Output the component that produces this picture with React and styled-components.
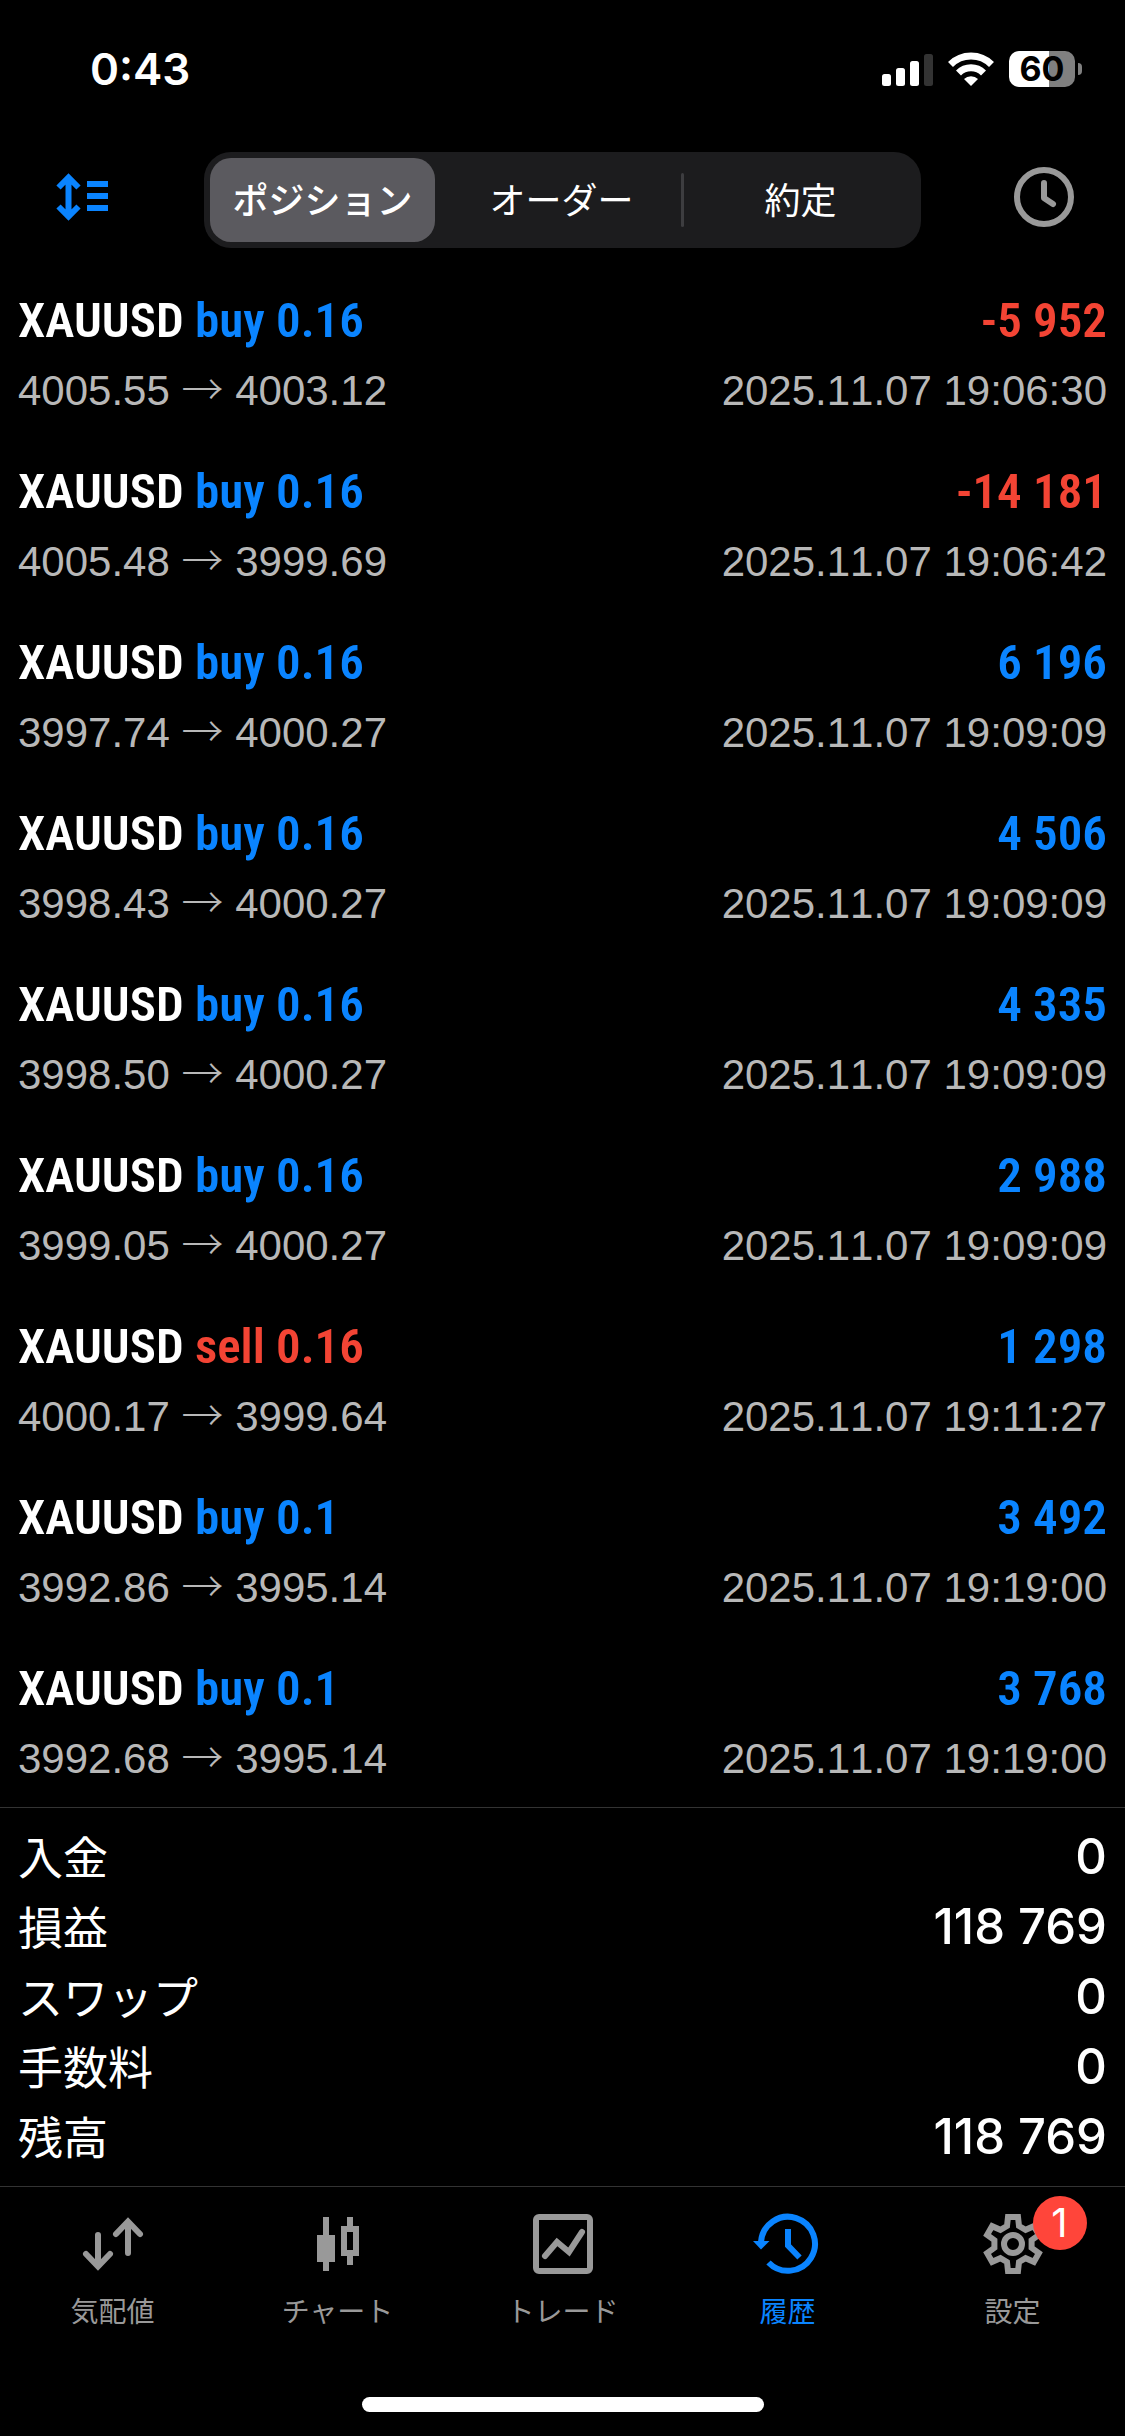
import React, { useState } from "react";
import styled, { createGlobalStyle } from "styled-components";

const deals = [
  { type: "buy", volume: "0.16", open: "4005.55", close: "4003.12", profit: "-5 952", time: "2025.11.07 19:06:30" },
  { type: "buy", volume: "0.16", open: "4005.48", close: "3999.69", profit: "-14 181", time: "2025.11.07 19:06:42" },
  { type: "buy", volume: "0.16", open: "3997.74", close: "4000.27", profit: "6 196", time: "2025.11.07 19:09:09" },
  { type: "buy", volume: "0.16", open: "3998.43", close: "4000.27", profit: "4 506", time: "2025.11.07 19:09:09" },
  { type: "buy", volume: "0.16", open: "3998.50", close: "4000.27", profit: "4 335", time: "2025.11.07 19:09:09" },
  { type: "buy", volume: "0.16", open: "3999.05", close: "4000.27", profit: "2 988", time: "2025.11.07 19:09:09" },
  { type: "sell", volume: "0.16", open: "4000.17", close: "3999.64", profit: "1 298", time: "2025.11.07 19:11:27" },
  { type: "buy", volume: "0.1", open: "3992.86", close: "3995.14", profit: "3 492", time: "2025.11.07 19:19:00" },
  { type: "buy", volume: "0.1", open: "3992.68", close: "3995.14", profit: "3 768", time: "2025.11.07 19:19:00" },
];

const summary = [
  { label: "入金", value: "0" },
  { label: "損益", value: "118 769" },
  { label: "スワップ", value: "0" },
  { label: "手数料", value: "0" },
  { label: "残高", value: "118 769" },
];

const segments = ["ポジション", "オーダー", "約定"];

// 歯車の輪郭 (歯6枚)
const gearPath = () => {
  const tooth = [
    [-6, -18],
    [-5, -27],
    [5, -27],
    [6, -18],
  ];
  const points = [];
  for (let i = 0; i < 6; i++) {
    const a = (i * Math.PI) / 3;
    tooth.forEach(([x, y]) => {
      const px = 30 + x * Math.cos(a) - y * Math.sin(a);
      const py = 30 + x * Math.sin(a) + y * Math.cos(a);
      points.push(`${px.toFixed(2)} ${py.toFixed(2)}`);
    });
  }
  return `M${points.join("L")}Z`;
};

const SortIcon = () => (
  <svg width="52" height="48" viewBox="-1 0 52 48" fill="none" stroke="currentColor" strokeWidth="6">
    <path d="M12.5 4V44M2.5 14.5L12.5 4.5L22.5 14.5M2.5 33.5L12.5 43.5L22.5 33.5" />
    <path d="M31 11H52M31 23H52M31 35H52" />
  </svg>
);

const ClockIcon = () => (
  <svg width="60" height="60" viewBox="0 0 60 60" fill="none" stroke="currentColor" strokeWidth="6">
    <circle cx="30" cy="30" r="27" />
    <path d="M30 16V31L39 37" strokeLinecap="round" strokeLinejoin="round" />
  </svg>
);

const QuotesIcon = () => (
  <TabSvg viewBox="0 0 60 60" strokeLinecap="round">
    <path d="M15 21V52M3 40L15 52.5L27 40" />
    <path d="M45 39V8M33 20L45 7.5L57 20" />
  </TabSvg>
);

const ChartIcon = () => (
  <TabSvg viewBox="0 0 60 60">
    <path d="M18 3V57M42 3V15M42 39V51" />
    <path d="M18 21V48" strokeWidth="18" />
    <path d="M36 15H48V39H36Z" />
  </TabSvg>
);

const TradeIcon = () => (
  <TabSvg viewBox="0 0 60 60">
    <rect x="3" y="3" width="54" height="54" rx="3" />
    <path d="M12 42L24 28L36 38L49 18" strokeLinecap="round" />
  </TabSvg>
);

const HistoryIcon = () => (
  <TabSvg viewBox="0 0 60 60">
    <path d="M3 28A27 27 0 1 1 10.5 48.5" />
    <path d="M-5 27H11.5L3 35.5Z" fill="currentColor" stroke="none" />
    <path d="M30 15V31.5L41.5 43.5" />
  </TabSvg>
);

const SettingsIcon = () => (
  <TabSvg viewBox="0 0 60 60">
    <path d={gearPath()} />
    <circle cx="30" cy="30" r="9" />
  </TabSvg>
);

const tabs = [
  { label: "気配値", Icon: QuotesIcon },
  { label: "チャート", Icon: ChartIcon },
  { label: "トレード", Icon: TradeIcon },
  { label: "履歴", Icon: HistoryIcon },
  { label: "設定", Icon: SettingsIcon, badge: 1 },
];

const StatusIcons = () => (
  <StatusRight>
    <svg width="51" height="33" viewBox="0 0 51 33" fill="#fff">
      <rect x="0" y="21" width="9" height="12" rx="2.5" />
      <rect x="14" y="15" width="9" height="18" rx="2.5" />
      <rect x="28" y="8" width="9" height="25" rx="2.5" />
      <rect x="42" y="1" width="9" height="32" rx="2.5" fill="#333" />
    </svg>
    <svg width="46" height="34" viewBox="0 0 46 34" fill="none" stroke="#fff" strokeWidth="7">
      <path d="M2.5 12.5A29 29 0 0 1 43.5 12.5" />
      <path d="M10.5 21A17.5 17.5 0 0 1 35.5 21" />
      <path d="M23 34L16 27A10 10 0 0 1 30 27Z" fill="#fff" stroke="none" />
    </svg>
    <Battery>
      <BatteryBody>60</BatteryBody>
      <BatteryTip />
    </Battery>
  </StatusRight>
);

const App = () => {
  const [segment, setSegment] = useState("ポジション");
  const [tab, setTab] = useState("履歴");

  return (
    <>
      <GlobalStyle />
      <Screen>
        <StatusBar>
          <Time>0:43</Time>
          <StatusIcons />
        </StatusBar>

        <Header>
          <IconButton $color="#0a84ff" aria-label="並べ替え">
            <SortIcon />
          </IconButton>
          <Segmented>
            {segments.map((name) => (
              <Segment key={name} $active={segment === name} onClick={() => setSegment(name)}>
                {name}
              </Segment>
            ))}
          </Segmented>
          <IconButton $color="#999" aria-label="期間">
            <ClockIcon />
          </IconButton>
        </Header>

        <DealList>
          {deals.map((deal, index) => (
            <DealRow key={index}>
              <DealTitle>
                <span>
                  XAUUSD{" "}
                  <Amount $minus={deal.type === "sell"}>
                    {deal.type} {deal.volume}
                  </Amount>
                </span>
                <Amount $minus={deal.profit.startsWith("-")}>{deal.profit}</Amount>
              </DealTitle>
              <DealDetail>
                <span>
                  {deal.open} <Arrow>→</Arrow> {deal.close}
                </span>
                <time>{deal.time}</time>
              </DealDetail>
            </DealRow>
          ))}
        </DealList>

        <Summary>
          {summary.map((item) => (
            <SummaryRow key={item.label}>
              <dt>{item.label}</dt>
              <dd>{item.value}</dd>
            </SummaryRow>
          ))}
        </Summary>

        <TabBar>
          {tabs.map(({ label, Icon, badge }) => (
            <TabButton key={label} $active={tab === label} onClick={() => setTab(label)}>
              <IconBox>
                <Icon />
                {badge && <Badge>{badge}</Badge>}
              </IconBox>
              {label}
            </TabButton>
          ))}
        </TabBar>
        <HomeIndicator />
      </Screen>
    </>
  );
};

export default App;

const GlobalStyle = createGlobalStyle`
  * {
    box-sizing: border-box;
  }
  body {
    margin: 0;
    background: #000;
    color: #fff;
    font-family: Inter, "Noto Sans CJK JP", sans-serif;
  }
  button {
    padding: 0;
    border: none;
    background: none;
    color: inherit;
    font-family: inherit;
  }
  svg {
    display: block;
    overflow: visible;
  }
`;

const Screen = styled.div`
  display: flex;
  flex-direction: column;
  width: 100%;
  min-height: 100vh;
  background: #000;
`;

const StatusBar = styled.div`
  display: flex;
  align-items: center;
  justify-content: space-between;
  height: 138px;
  padding: 0 43px 0 90px;
`;

const Time = styled.div`
  font-size: 44px;
  font-weight: 600;
`;

const StatusRight = styled.div`
  display: flex;
  align-items: center;
  gap: 15px;
`;

const Battery = styled.div`
  display: flex;
  align-items: center;
  gap: 3px;
`;

const BatteryBody = styled.div`
  width: 66px;
  height: 36px;
  border-radius: 10px;
  background: linear-gradient(to right, #fff 60%, #808080 60%);
  color: #000;
  font-size: 34px;
  font-weight: 700;
  line-height: 36px;
  text-align: center;
`;

const BatteryTip = styled.div`
  width: 4px;
  height: 12px;
  border-radius: 0 4px 4px 0;
  background: #808080;
`;

const Header = styled.header`
  display: flex;
  align-items: center;
  gap: 93px;
  padding: 14px 51px 20px;
`;

const IconButton = styled.button`
  display: flex;
  justify-content: center;
  width: 60px;
  padding-bottom: 6px;
  color: ${({ $color }) => $color};
`;

const Segmented = styled.div`
  display: flex;
  flex: 1;
  height: 96px;
  border-radius: 27px;
  background: #1c1c1e;
`;

const Segment = styled.button`
  position: relative;
  flex: 1;
  margin: 6px 8px 6px 6px;
  padding-bottom: 4px;
  border-radius: 21px;
  background: ${({ $active }) => ($active ? "#5b5a5f" : "none")};
  font-size: 36px;
  font-weight: ${({ $active }) => ($active ? 500 : 400)};

  /* 選択されていない項目の間の区切り線 */
  & + &:not(:nth-child(2))::before {
    content: "";
    position: absolute;
    left: -7px;
    top: 15px;
    bottom: 15px;
    width: 3px;
    border-radius: 2px;
    background: #3d3d40;
  }
`;

const DealList = styled.ul`
  flex: 1;
  margin: 0;
  padding: 0;
  list-style: none;
`;

const DealRow = styled.li`
  padding: 18px 18px 13px;
`;

const DealTitle = styled.div`
  display: flex;
  justify-content: space-between;
  font-family: "Roboto Condensed", "Liberation Sans Narrow", Roboto, sans-serif;
  font-size: 49px;
  font-weight: 600;
  line-height: 70px;
`;

const Amount = styled.span`
  color: ${({ $minus }) => ($minus ? "#f34434" : "#0a84ff")};
`;

const DealDetail = styled.div`
  display: flex;
  justify-content: space-between;
  color: #b8b8b8;
  font-family: "Liberation Sans", Arial, sans-serif;
  font-size: 42px;
  font-kerning: none;
  line-height: 70px;
`;

const Arrow = styled.span`
  font-family: "Noto Sans CJK JP", sans-serif;
  font-weight: 300;
  line-height: 1;
`;

const Summary = styled.dl`
  margin: 0;
  padding: 14px 18px;
  border-top: 1px solid #333;
`;

const SummaryRow = styled.div`
  display: flex;
  justify-content: space-between;
  height: 70px;
  line-height: 70px;

  dt {
    padding-top: 2px;
    font-size: 45px;
  }
  dd {
    margin: 0;
    font-size: 49px;
    font-weight: 500;
  }
`;

const TabBar = styled.nav`
  display: flex;
  padding-top: 27px;
  border-top: 1px solid #333;
`;

const TabButton = styled.button`
  display: flex;
  flex: 1;
  flex-direction: column;
  align-items: center;
  gap: 20px;
  color: ${({ $active }) => ($active ? "#0a84ff" : "#999")};
  font-size: 28px;
  font-weight: 400;
  line-height: 36px;
`;

const TabSvg = styled.svg.attrs({ fill: "none", stroke: "currentColor", strokeWidth: 6 })`
  width: 60px;
  height: 60px;
`;

const IconBox = styled.div`
  position: relative;
`;

const Badge = styled.span`
  position: absolute;
  top: -18px;
  left: 50px;
  width: 54px;
  height: 54px;
  border-radius: 50%;
  background: #ff453a;
  color: #fff;
  font-size: 40px;
  font-weight: 400;
  line-height: 54px;
`;

const HomeIndicator = styled.div`
  width: 402px;
  height: 15px;
  margin: 67px auto 24px;
  border-radius: 8px;
  background: #fff;
`;
